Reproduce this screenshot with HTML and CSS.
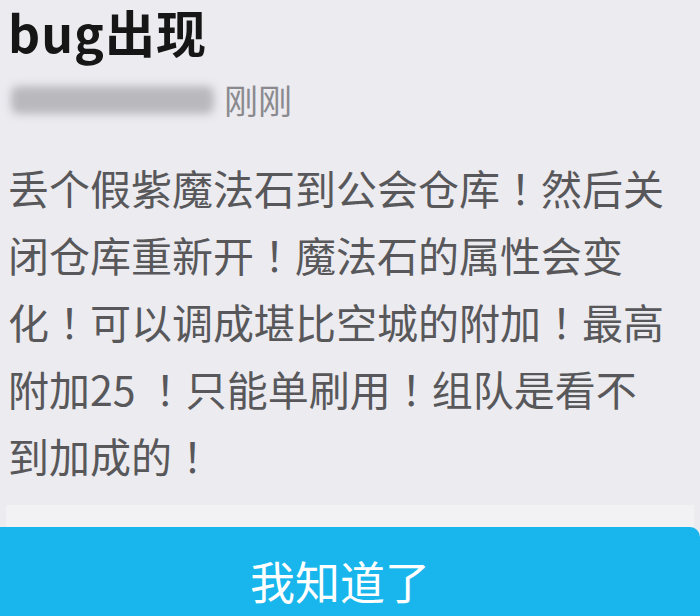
FILE: index.html
```html
<!DOCTYPE html>
<html lang="zh-CN">
<head>
<meta charset="utf-8">
<link rel="stylesheet" href="styles.css">
</head>
<body>
<div class="page">
  <div class="content">
    <h1 class="title">bug出现</h1>
    <div class="meta">
      <span class="name-blur"></span>
      <span class="time">刚刚</span>
    </div>
    <p class="body">丢个假紫魔法石到公会仓库<span class="bang" lang="zh-TW">！</span>然后关<br>闭仓库重新开<span class="bang" lang="zh-TW">！</span>魔法石的属性会变<br>化<span class="bang" lang="zh-TW">！</span>可以调成堪比空城的附加<span class="bang" lang="zh-TW">！</span>最高<br>附加25 <span class="bang" lang="zh-TW">！</span>只能单刷用<span class="bang" lang="zh-TW">！</span>组队是看不<br>到加成的<span class="bang" lang="zh-TW">！</span></p>
  </div>
  <div class="strip"></div>
  <div class="button">我知道了</div>
</div>
</body>
</html>
```
FILE: styles.css
```css
* { box-sizing: border-box; }
html, body { margin: 0; padding: 0; }
body {
  width: 700px;
  height: 616px;
  overflow: hidden;
  background: #ecebf0;
  font-family: "Noto Sans CJK SC", "Noto Sans", sans-serif;
}
.page {
  display: flex;
  flex-direction: column;
  height: 616px;
}
.content {
  flex: 1;
  padding: 0 0 0 8px;
}
.title {
  margin: 0;
  padding-top: 3px;
  font-size: 50px;
  font-weight: 700;
  color: #161616;
  line-height: 57px;
  letter-spacing: 1px;
}
.meta {
  display: flex;
  align-items: center;
  gap: 10px;
  margin-top: 20px;
  height: 40px;
}
.name-blur {
  display: block;
  width: 203px;
  height: 28px;
  margin-left: 3px;
  background: #b9b9bd;
  border-radius: 8px;
  filter: blur(4px);
}
.time {
  font-size: 34px;
  color: #8a8a8e;
  line-height: 40px;
}
.body {
  margin: 34px 0 0 0;
  font-size: 41px;
  line-height: 67px;
  color: #58585b;
  white-space: nowrap;
}
.bang {
  font-family: "Noto Sans CJK TC", sans-serif;
}
.strip {
  height: 22px;
  background: #f2f2f4;
  margin: 0 6px;
}
.button {
  height: 89px;
  background: #18b6ec;
  border-top-right-radius: 10px;
  color: #ffffff;
  font-size: 45px;
  display: flex;
  align-items: center;
  justify-content: center;
  padding: 18px 20px 0 0;
}
```
